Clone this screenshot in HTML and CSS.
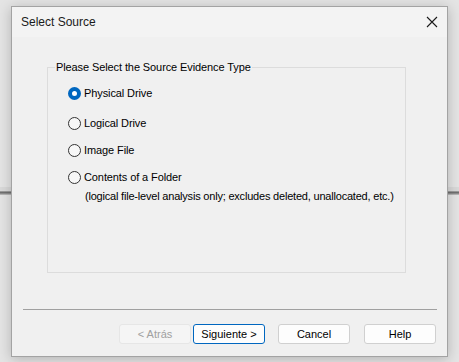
FILE: index.html
```html
<!DOCTYPE html>
<html>
<head>
<meta charset="utf-8">
<link rel="stylesheet" href="styles.css">
</head>
<body>
<div class="desk-strip">
  <div class="band-light"></div>
  <div class="band-dark1"></div>
  <div class="band-dark2"></div>
  <div class="band-dark3"></div>
  <div class="band-dark4"></div>
</div>
<div class="dialog">
  <div class="titlebar">
    <span class="title">Select Source</span>
    <svg class="close" width="12" height="12" viewBox="0 0 12 12">
      <path d="M1 1 L11 11 M11 1 L1 11" stroke="#1a1a1a" stroke-width="1.1" fill="none"/>
    </svg>
  </div>
  <div class="body">
    <div class="group">
      <span class="legend">Please Select the Source Evidence Type</span>
      <div class="options">
        <div class="opt first"><span class="radio checked"></span><span>Physical Drive</span></div>
        <div class="opt second"><span class="radio"></span><span>Logical Drive</span></div>
        <div class="opt"><span class="radio"></span><span>Image File</span></div>
        <div class="opt"><span class="radio"></span><span>Contents of a Folder</span></div>
        <div class="note">(logical file-level analysis only; excludes deleted, unallocated, etc.)</div>
      </div>
    </div>
  </div>
  <div class="separator"></div>
  <div class="footer">
    <button class="btn disabled">&lt; Atrás</button>
    <button class="btn default">Siguiente &gt;</button>
    <button class="btn cancel">Cancel</button>
    <button class="btn help">Help</button>
  </div>
</div>
</body>
</html>
```

FILE: styles.css
```css
html, body {
  margin: 0;
  padding: 0;
}
body {
  width: 459px;
  height: 362px;
  overflow: hidden;
  background: #e4e4e4;
  font-family: "Liberation Sans", Arial, sans-serif;
  position: relative;
}
.desk-strip {
  padding-top: 187px;
}
.band-light { height: 4px; background: #d9d9d9; }
.band-dark1 { height: 1px; background: #9a9a9a; }
.band-dark2 { height: 1px; background: #707070; }
.band-dark3 { height: 1px; background: #8c8c8c; }
.band-dark4 { height: 1px; background: #b4b4b4; }

.dialog {
  position: absolute;
  left: 11px;
  top: 6px;
  width: 435px;
  height: 349px;
  border: 1px solid #a3a3a3;
  background: #f0f0f0;
  box-shadow: 0 2px 12px rgba(0,0,0,0.22);
  display: flex;
  flex-direction: column;
}
.titlebar {
  height: 30px;
  flex: none;
  background: #f3f3f3;
  display: flex;
  align-items: center;
  justify-content: space-between;
  padding: 0 9px 0 9px;
}
.title {
  font-size: 12px;
  color: #1a1a1a;
  margin-top: -1px;
}
.close {
  margin-top: -1px;
}
.body {
  flex: none;
  padding: 30px 0 0 35px;
}
.group {
  width: 357px;
  height: 204px;
  border: 1px solid #dcdcdc;
  font-size: 11px;
  color: #000;
  letter-spacing: -0.1px;
}
.legend {
  display: block;
  width: fit-content;
  line-height: 13px;
  margin: -7px 0 0 7px;
  padding: 0 1px;
  background: #f0f0f0;
}
.options {
  padding: 12px 0 0 20px;
}
.opt {
  display: flex;
  align-items: center;
  height: 14px;
  line-height: 14px;
  margin-top: 13px;
}
.opt.first { margin-top: 0; }
.opt.second { margin-top: 16px; }
.radio {
  width: 11px;
  height: 11px;
  border: 1px solid #333;
  border-radius: 50%;
  background: #f7f7f7;
  margin-right: 3px;
  flex: none;
  box-sizing: content-box;
}
.radio.checked {
  width: 5px;
  height: 5px;
  border: 4px solid #0067c0;
  background: #fff;
}
.note {
  line-height: 14px;
  margin: 5px 0 0 17px;
  letter-spacing: -0.2px;
}
.separator {
  height: 1px;
  background: #a0a0a0;
  margin: 36px 10px 0 11px;
  flex: none;
}
.footer {
  display: flex;
  justify-content: flex-end;
  padding: 14px 11px 0 0;
}
.btn {
  width: 72px;
  height: 20px;
  box-sizing: border-box;
  border: 1px solid #d0d0d0;
  border-radius: 3px;
  background: #fdfdfd;
  font-family: "Liberation Sans", Arial, sans-serif;
  font-size: 11px;
  color: #000;
  padding: 0;
}
.btn.disabled {
  background: #f5f5f5;
  border-color: #e6e6e6;
  color: #a0a0a0;
}
.btn.default {
  margin-left: 2px;
  border-color: #0067c0;
}
.btn.cancel { margin-left: 13px; }
.btn.help { margin-left: 14px; }
```
